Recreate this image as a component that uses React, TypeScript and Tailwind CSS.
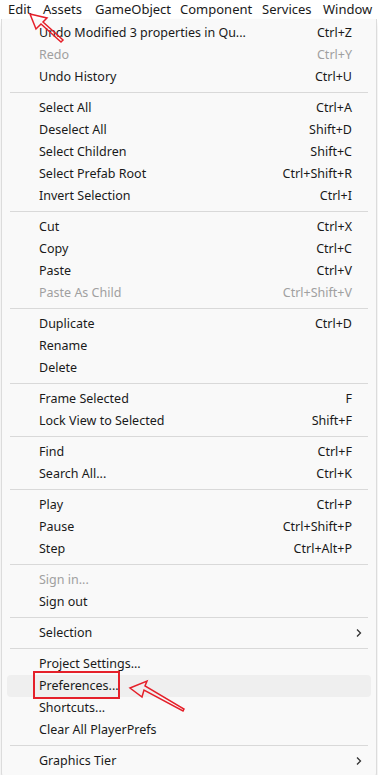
import React from 'react';

type Item =
  | { kind: 'sep' }
  | { kind: 'item'; label: string; shortcut?: string; disabled?: boolean; submenu?: boolean; hot?: boolean };

const sep: Item = { kind: 'sep' };
const it = (label: string, shortcut?: string, extra: Partial<Item> = {}): Item =>
  ({ kind: 'item', label, shortcut, ...extra } as Item);

const items: Item[] = [
  it('Undo Modified 3 properties in Qu...', 'Ctrl+Z'),
  it('Redo', 'Ctrl+Y', { disabled: true }),
  it('Undo History', 'Ctrl+U'),
  sep,
  it('Select All', 'Ctrl+A'),
  it('Deselect All', 'Shift+D'),
  it('Select Children', 'Shift+C'),
  it('Select Prefab Root', 'Ctrl+Shift+R'),
  it('Invert Selection', 'Ctrl+I'),
  sep,
  it('Cut', 'Ctrl+X'),
  it('Copy', 'Ctrl+C'),
  it('Paste', 'Ctrl+V'),
  it('Paste As Child', 'Ctrl+Shift+V', { disabled: true }),
  sep,
  it('Duplicate', 'Ctrl+D'),
  it('Rename'),
  it('Delete'),
  sep,
  it('Frame Selected', 'F'),
  it('Lock View to Selected', 'Shift+F'),
  sep,
  it('Find', 'Ctrl+F'),
  it('Search All...', 'Ctrl+K'),
  sep,
  it('Play', 'Ctrl+P'),
  it('Pause', 'Ctrl+Shift+P'),
  it('Step', 'Ctrl+Alt+P'),
  sep,
  it('Sign in...', undefined, { disabled: true }),
  it('Sign out'),
  sep,
  it('Selection', undefined, { submenu: true }),
  sep,
  it('Project Settings...'),
  it('Preferences...', undefined, { hot: true }),
  it('Shortcuts...'),
  it('Clear All PlayerPrefs'),
  sep,
  it('Graphics Tier', undefined, { submenu: true }),
];

// top-level menu names with the slot widths they take in the bar
const menus: [string, string][] = [
  ['Edit', 'w-[35px]'],
  ['Assets', 'w-[52px]'],
  ['GameObject', 'w-[85px]'],
  ['Component', 'w-[82px]'],
  ['Services', 'w-[61px]'],
  ['Window', 'w-[50px]'],
];

const Chevron = () => (
  <svg width="8" height="10" viewBox="0 0 8 10" className="text-[#333]">
    <path d="M2 1.5 L5.5 5 L2 8.5" fill="none" stroke="currentColor" strokeWidth="1.3" />
  </svg>
);

export default function App() {
  return (
    <div
      className="relative w-[378px] h-[775px] overflow-hidden bg-white text-[12.5px] text-[#1a1a1a]"
      style={{ fontFamily: '"Noto Sans", "Open Sans", sans-serif' }}
    >
      {/* menu bar */}
      <div className="flex h-[19px] items-center pl-[8px] text-[13px] leading-none">
        {menus.map(([m, w]) => (
          <span key={m} className={`${w} shrink-0 whitespace-nowrap`}>
            {m}
          </span>
        ))}
      </div>

      {/* dropdown */}
      <div className="mx-[1px] h-[760px] rounded-b-md border border-t-0 border-[#dcdcdc] bg-[#f9f9f9] pt-[3px] shadow-md">
        {items.map((item, i) =>
          item.kind === 'sep' ? (
            <div key={i} className="flex h-[9px] items-center px-[8px]">
              <div className="h-px w-full bg-[#d9d9d9]" />
            </div>
          ) : (
            <div
              key={i}
              className={`mx-[5px] flex h-[22px] items-center rounded pl-[32px] pr-[19px] ${
                item.hot ? 'bg-[#efefef]' : ''
              } ${item.disabled ? 'text-[#a0a0a0]' : ''}`}
            >
              <span className="flex-1 whitespace-nowrap">{item.label}</span>
              {item.shortcut && <span className="whitespace-nowrap">{item.shortcut}</span>}
              {item.submenu && (
                <span className="-mr-[11px]">
                  <Chevron />
                </span>
              )}
            </div>
          )
        )}
      </div>

      {/* annotations */}
      <div className="absolute left-[33px] top-[671px] h-[28px] w-[87px] border-2 border-[#e5202a]" />
      <svg className="absolute left-0 top-0" width="378" height="775" viewBox="0 0 378 775" fill="none">
        {/* arrow pointing at Edit */}
        <path
          d="M30 14 L47 18 L43 22 L63 40 L61 42 L41 24 L36 29 Z"
          stroke="#e5202a"
          strokeWidth="1.5"
          strokeLinejoin="miter"
          fill="none"
        />
        {/* arrow pointing at Preferences */}
        <path
          d="M130 688 L147 681 L145 686 L184 709 L183 711 L144 690 L142 697 Z"
          stroke="#e5202a"
          strokeWidth="1.5"
          fill="none"
        />
      </svg>
    </div>
  );
}
